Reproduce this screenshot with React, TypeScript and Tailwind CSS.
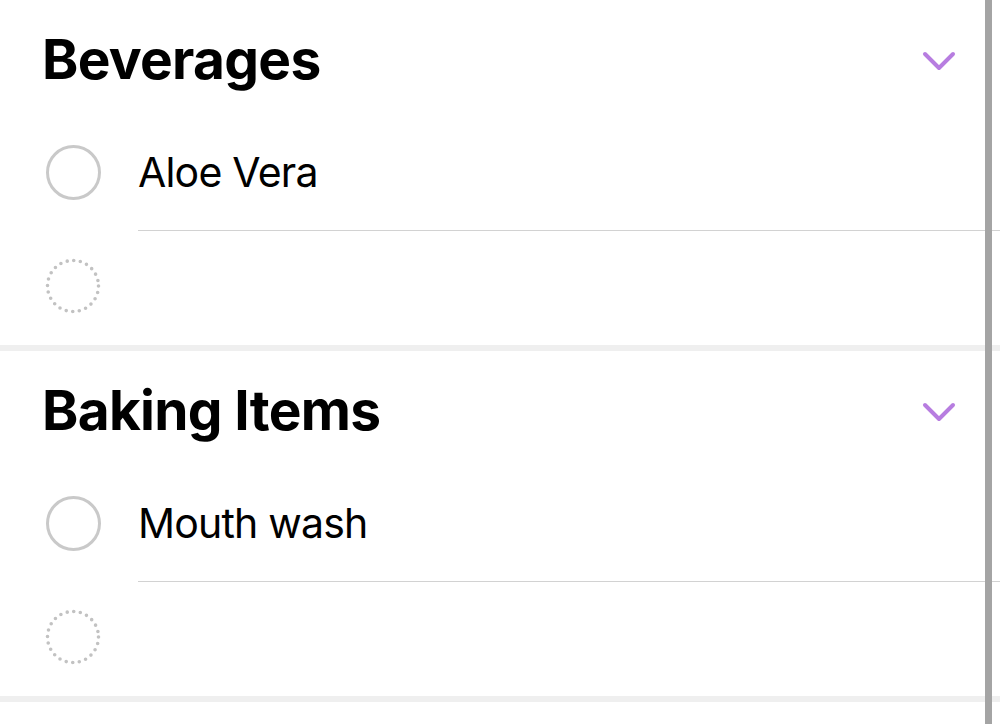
import React from "react";

const sections = [
  { title: "Beverages", items: ["Aloe Vera"] },
  { title: "Baking Items", items: ["Mouth wash"] },
];

function Chevron() {
  return (
    <svg width="34" height="22" viewBox="0 0 34 22" fill="none">
      <polyline
        points="3,4 17,18 31,4"
        stroke="#b77de0"
        strokeWidth="4"
        strokeLinecap="round"
        strokeLinejoin="round"
      />
    </svg>
  );
}

function RingCheck() {
  return <div className="w-[55px] h-[55px] rounded-full border-[3px] border-[#c9c9c9] shrink-0" />;
}

function DottedRing() {
  const r = 25.5;
  const gap = (2 * Math.PI * r) / 24;
  return (
    <svg width="56" height="56" viewBox="0 0 56 56" className="shrink-0">
      <circle
        cx="28"
        cy="28"
        r={r}
        fill="none"
        stroke="#c2c2c2"
        strokeWidth="3.6"
        strokeLinecap="round"
        strokeDasharray={`0 ${gap}`}
      />
    </svg>
  );
}

function Section({ title, items }: { title: string; items: string[] }) {
  return (
    <section className="border-b-[6px] border-[#efefef]">
      <div className="h-[345px] flex flex-col">
        <div className="h-[115px] flex items-start justify-between pl-[42px] pr-[44px] pt-[24px]">
          <h2 className="text-[55px] leading-[70px] font-bold text-black tracking-[-0.7px]">{title}</h2>
          <div className="pt-[26px]">
            <Chevron />
          </div>
        </div>
        {items.map((item) => (
          <div key={item}>
            <div className="h-[115px] flex items-center pl-[46px]">
              <RingCheck />
              <span className="ml-[37px] text-[41px] text-black tracking-[-0.8px]">{item}</span>
            </div>
            <div className="ml-[138px] h-px bg-[#d2d2d2]" />
          </div>
        ))}
        <div className="h-[110px] flex items-center pl-[45px]">
          <DottedRing />
        </div>
      </div>
    </section>
  );
}

export default function App() {
  return (
    <div className="relative w-[1000px] h-[724px] overflow-hidden bg-white" style={{ fontFamily: "Inter, 'Noto Sans', sans-serif" }}>
      {sections.map((s) => (
        <Section key={s.title} title={s.title} items={s.items} />
      ))}
      <div className="absolute top-0 bottom-0 left-[985px] w-[7px] bg-[#a4a4a4]" />
    </div>
  );
}
